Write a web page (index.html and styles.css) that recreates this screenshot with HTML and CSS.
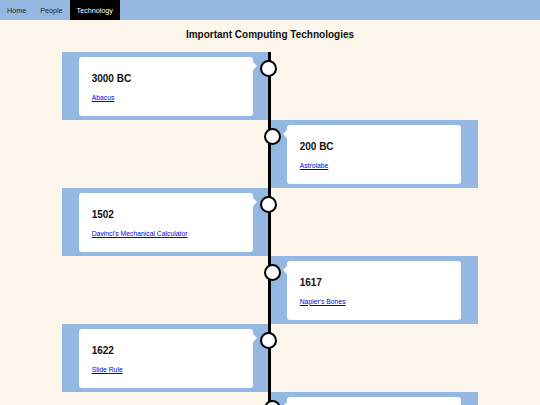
FILE: index.html
```html
<!DOCTYPE html>
<html>
<head>
<meta charset="utf-8">
<link rel="stylesheet" href="styles.css">
</head>
<body>
<nav class="topnav">
  <a href="#" class="nav-item">Home</a>
  <a href="#" class="nav-item">People</a>
  <a href="#" class="nav-item active">Technology</a>
</nav>
<h1 class="page-title">Important Computing Technologies</h1>
<div class="timeline">
  <div class="entry left">
    <div class="card"><h2 class="year">3000 BC</h2><a href="#" class="tech">Abacus</a></div>
  </div>
  <div class="entry right">
    <div class="card"><h2 class="year">200 BC</h2><a href="#" class="tech">Astrolabe</a></div>
  </div>
  <div class="entry left">
    <div class="card"><h2 class="year">1502</h2><a href="#" class="tech">Davinci's Mechanical Calculator</a></div>
  </div>
  <div class="entry right">
    <div class="card"><h2 class="year">1617</h2><a href="#" class="tech">Napier's Bones</a></div>
  </div>
  <div class="entry left">
    <div class="card"><h2 class="year">1622</h2><a href="#" class="tech">Slide Rule</a></div>
  </div>
  <div class="entry right">
    <div class="card"><h2 class="year">1642</h2><a href="#" class="tech">Pascaline</a></div>
  </div>
</div>
</body>
</html>
```
FILE: styles.css
```css
* { box-sizing: border-box; }
body {
  margin: 0;
  background: #fcf5eb;
  font-family: "Liberation Sans", Arial, sans-serif;
}
.topnav {
  display: flex;
  height: 20px;
  background: #95b8e3;
}
.nav-item {
  display: flex;
  align-items: center;
  padding: 0 7px;
  font-size: 7.2px;
  color: #222;
  text-decoration: none;
}
.nav-item.active {
  background: #000;
  color: #fff;
}
.page-title {
  margin: 0;
  padding: 8.5px 0 11.5px;
  font-size: 10px;
  line-height: 12px;
  text-align: center;
  color: #111;
}
.timeline {
  position: relative;
  width: 416px;
  margin: 0 auto;
}
.timeline::after {
  content: "";
  position: absolute;
  top: 0;
  bottom: 0;
  left: 206px;
  width: 3px;
  background: #000;
}
.entry {
  position: relative;
  width: 50%;
  padding: 5px 17px 4px;
  background: #95b8e3;
}
.entry.right { margin-left: 50%; }
.entry::after {
  content: "";
  position: absolute;
  top: 7.5px;
  width: 13px;
  height: 13px;
  border: 2px solid #000;
  border-radius: 50%;
  background: #fff;
  z-index: 2;
}
.entry.left::after { right: -7px; }
.entry.right::after { left: -6px; }
.entry::before {
  content: "";
  position: absolute;
  top: 10px;
  width: 0;
  height: 0;
  border: 4px solid transparent;
}
.entry.left::before {
  right: 13px;
  border-right-width: 0;
  border-left-color: #fff;
}
.entry.right::before {
  left: 13px;
  border-left-width: 0;
  border-right-color: #fff;
}
.card {
  height: 59px;
  padding: 16px 12.7px 0;
  background: #fff;
  border-radius: 3px;
}
.year {
  margin: 0;
  font-size: 10px;
  line-height: 12px;
  color: #111;
}
.tech {
  display: inline-block;
  margin-top: 7.5px;
  font-size: 6.8px;
  line-height: 9px;
  color: #0000ee;
}
```
